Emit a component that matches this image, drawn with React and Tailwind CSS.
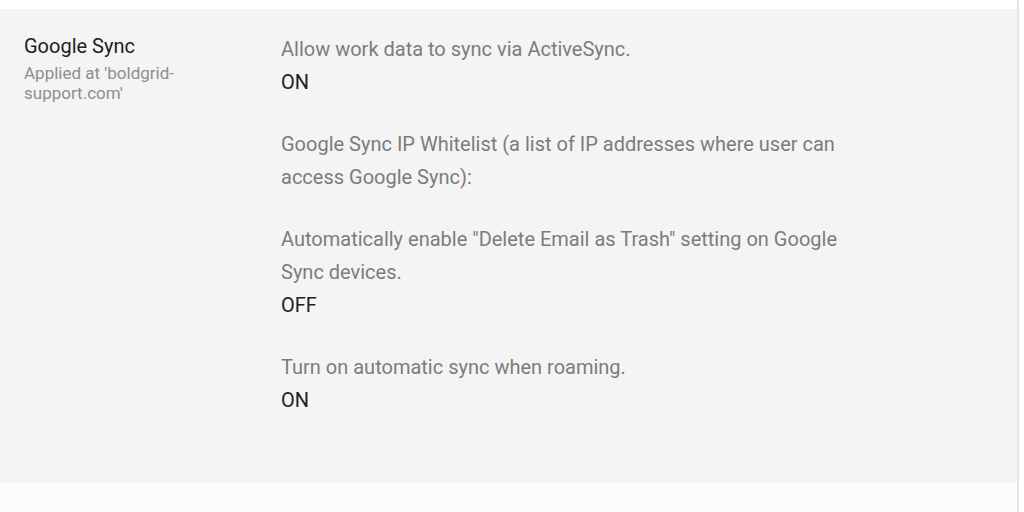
const settings = [
  { label: "Allow work data to sync via ActiveSync.", value: "ON" },
  {
    label:
      "Google Sync IP Whitelist (a list of IP addresses where user can access Google Sync):",
    value: null,
  },
  {
    label:
      'Automatically enable "Delete Email as Trash" setting on Google Sync devices.',
    value: "OFF",
  },
  { label: "Turn on automatic sync when roaming.", value: "ON" },
];

export default function App() {
  return (
    <div
      className="flex h-[512px] w-full bg-white"
      style={{ fontFamily: "Roboto, 'Liberation Sans', sans-serif" }}
    >
      <div className="flex flex-1 flex-col pt-[9px]">
        <section className="flex h-[474px] bg-[#f4f4f4] pl-6 pt-[24px]">
          {/* titre du bloc */}
          <div className="w-[180px] shrink-0 pt-[3px]">
            <h3 className="text-[20px] leading-[20px] text-[#212121]">Google Sync</h3>
            <p className="mt-[7px] text-[17px] leading-[20px] text-[#8e8e8e]">
              Applied at 'boldgrid-support.com'
            </p>
          </div>

          <div className="ml-[77px] flex w-[572px] flex-col gap-[29px]">
            {settings.map((s, i) => (
              <div key={i} className="text-[20px] leading-[33px]">
                <p className="text-[#7c7c7c]">{s.label}</p>
                {s.value && <p className="text-[#212121]">{s.value}</p>}
              </div>
            ))}
          </div>
        </section>
        <div className="flex-1 bg-[#fcfcfc]" />
      </div>
      <div className="w-[7px] border-l-2 border-[#e6e6e6] bg-white" />
    </div>
  );
}
